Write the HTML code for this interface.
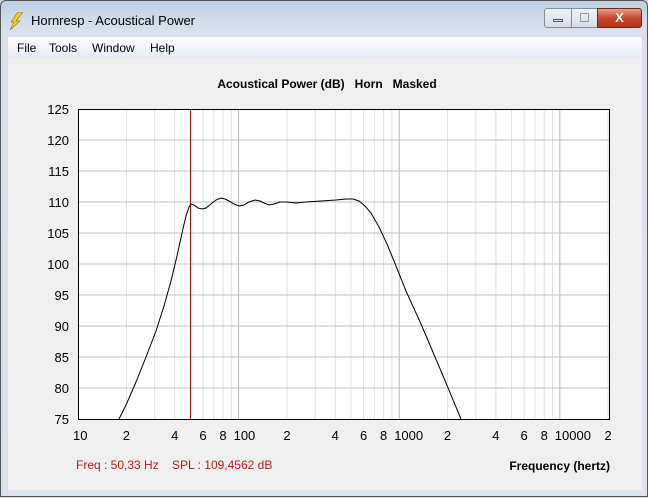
<!DOCTYPE html>
<html><head><style>
body{margin:0;width:648px;height:497px;overflow:hidden;background:#c9d6e3;font-family:"Liberation Sans",sans-serif;}
#win{position:absolute;left:0;top:0;width:648px;height:497px;background:linear-gradient(#bfd0e2,#d7e2ee 30px,#dbe5f0);border:1px solid #555;box-sizing:border-box;border-radius:6px 6px 0 0;}
#title{position:absolute;left:30px;top:12px;font-size:13px;color:#000;}
#menu{position:absolute;left:7px;top:36px;width:634px;height:21px;background:linear-gradient(#fdfdfe,#e6ecf5);font-size:12px;}
#menu span{position:absolute;top:4px;}
#client{position:absolute;left:7px;top:57px;width:634px;height:432px;background:#f0f0f0;}
svg text{font-family:"Liberation Sans",sans-serif;}
</style></head><body>
<div id="win">
<svg style="position:absolute;left:8px;top:11px" width="14" height="18"><polygon points="9,0 14,0 7,9 11,9 1,18 5,10 2,10" fill="#f0d020" stroke="#a08000" stroke-width="0.7"/></svg>
<div id="title">Hornresp - Acoustical Power</div>
<div style="position:absolute;left:543px;top:7px;width:26px;height:18px;border:1px solid #7f8fa3;border-radius:3px 0 0 3px;background:linear-gradient(#eef3f9,#d3dde9)"><div style="position:absolute;left:8px;top:10px;width:10px;height:3px;border:1px solid #555;box-sizing:border-box"></div></div>
<div style="position:absolute;left:570px;top:7px;width:25px;height:18px;border:1px solid #7f8fa3;background:linear-gradient(#eef3f9,#d3dde9)"><div style="position:absolute;left:8px;top:4px;width:9px;height:9px;border:1px solid #999;box-sizing:border-box"></div></div>
<div style="position:absolute;left:596px;top:7px;width:43px;height:18px;border:1px solid #6b2a1e;border-radius:0 3px 3px 0;background:linear-gradient(#e8a08c,#c8452e 50%,#b83219);color:#fff;font-weight:bold;font-size:13px;text-align:center;line-height:18px">X</div>
<div id="menu"><span style="left:9px">File</span><span style="left:41px">Tools</span><span style="left:84px">Window</span><span style="left:142px">Help</span></div>
<div id="client"></div>
<svg id="plot" style="position:absolute;left:0;top:0" width="648" height="497"></svg>
</div>
<script>
var s=document.getElementById('plot'),h='';
function X(f){return 77+160.6*Math.log10(f/10);}
h+='<rect x="77" y="108" width="531" height="310" fill="#fff"/>';
for(var d=10;d<=10000;d*=10)for(var m=1;m<10;m++){var f=d*m;if(f>20000)break;var x=X(f);if(m==1&&d==10)continue;h+='<line x1="'+x+'" y1="108" x2="'+x+'" y2="418" stroke="'+(m==1?'#b8b8b8':'#e0e0e0')+'"/>';}
for(var v=80;v<125;v+=5){var y=108+(125-v)*6.2;h+='<line x1="77" y1="'+y+'" x2="608" y2="'+y+'" stroke="#c0c0c0"/>';}
h+='<line x1="189.5" y1="108" x2="189.5" y2="418" stroke="#a01010"/>';
h+='<polyline fill="none" stroke="#000" stroke-width="1" points="118,418 125,404 135,381 145,356 155,330 163,305 170,280 176,255 181,232 185,215 188,206 190,203 193,204 197,207 201,208 205,207 210,203 215,199 220,197 224,198 228,200 233,203 238,205 243,204 248,201 254,199 259,200 263,202 268,204 273,203 279,201 285,201 295,202 305,201 320,200 335,199 345,198 352,198 358,200 364,205 370,212 378,226 386,243 395,265 405,290 420,323 440,370 460,418"/>';
h+='<rect x="77.5" y="108.5" width="531" height="310" fill="none" stroke="#000"/>';
for(var v=75;v<=125;v+=5){var y=108+(125-v)*6.2;h+='<text x="68" y="'+(y+5)+'" font-size="13" text-anchor="end">'+v+'</text>';}
var lab=[[10,'10'],[20,'2'],[40,'4'],[60,'6'],[80,'8'],[100,'100'],[200,'2'],[400,'4'],[600,'6'],[800,'8'],[1000,'1000'],[2000,'2'],[4000,'4'],[6000,'6'],[8000,'8'],[10000,'10000'],[20000,'2']];
lab.forEach(function(l){var x=X(l[0]);var a=l[1].length>1?'start':'middle';var xx=l[1].length>1?x-5:x;if(l[0]==10)xx=72;h+='<text x="'+xx+'" y="439" font-size="13" text-anchor="'+a+'">'+l[1]+'</text>';});
h+='<text x="326" y="87" font-size="12" font-weight="bold" text-anchor="middle">Acoustical Power (dB) &#160;&#160;Horn &#160;&#160;Masked</text>';
h+='<text x="75" y="468" font-size="12" fill="#c01818">Freq : 50,33 Hz &#160;&#160;&#160;SPL : 109,4562 dB</text>';
h+='<text x="609" y="469" font-size="12" font-weight="bold" text-anchor="end">Frequency (hertz)</text>';
s.innerHTML=h;
</script>
</body></html>
